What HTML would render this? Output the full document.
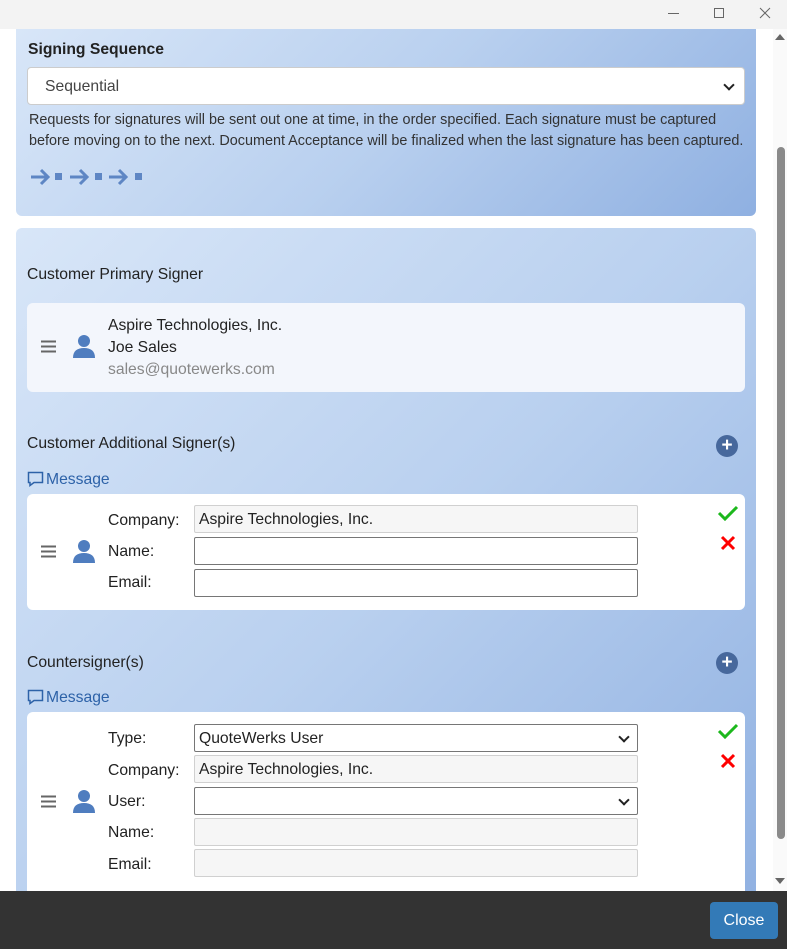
<!DOCTYPE html>
<html><head><style>
*{box-sizing:border-box;margin:0;padding:0}
body{width:787px;height:949px;overflow:hidden;background:#fff;font-family:"Liberation Sans",Arial,sans-serif;color:#222;position:relative}
.a{position:absolute}
.grad{background:linear-gradient(135deg,#d8e6f8 0%,#b9d0ef 50%,#8fb0e1 100%)}
.t16{font-size:15.7px}
.inp{position:absolute;left:194px;width:444px;height:28px;border:1px solid #767676;border-radius:2px;background:#fff;font-size:15.7px;padding:5px 4px;line-height:18px}
.ro{background:#f6f6f6;border-color:#d0d0d0}
.lbl{position:absolute;left:108px;font-size:15.7px;color:#222}
.msg{color:#2d62a8;font-size:15.7px}
.sel::after{content:"";position:absolute;right:9px;top:8px;width:6px;height:6px;border-right:2px solid #222;border-bottom:2px solid #222;transform:rotate(45deg)}
.big::after{top:13px;right:11px}
</style></head><body>
<div class="a" style="left:0;top:0;width:787px;height:29px;background:#f3f3f3"></div>
<div class="a" style="left:668px;top:13px;width:11px;height:1px;background:#666"></div>
<div class="a" style="left:714px;top:8px;width:10px;height:10px;border:1px solid #666"></div>
<svg class="a" style="left:759px;top:7px" width="12" height="12"><path d="M1 1L11 11M11 1L1 11" stroke="#666" stroke-width="1"/></svg>

<div class="a grad" style="left:16px;top:29px;width:740px;height:187px;border-radius:0 0 6px 6px"></div>
<div class="a" style="left:28px;top:41px;font-size:15.7px;font-weight:bold;color:#222">Signing Sequence</div>
<div class="a sel big" style="left:27px;top:67px;width:718px;height:38px;background:#fff;border:1px solid #ccc;border-radius:4px;padding:10px 17px;font-size:15.7px;color:#444">Sequential</div>
<div class="a" style="left:29px;top:110px;font-size:14.4px;line-height:21px;color:#333;width:740px;white-space:nowrap">Requests for signatures will be sent out one at time, in the order specified. Each signature must be captured<br>before moving on to the next. Document Acceptance will be finalized when the last signature has been captured.</div>
<svg class="a" style="left:29px;top:167px" width="120" height="20" fill="#5e86c4" stroke="#5e86c4">
<g stroke-width="3" fill="none"><path d="M2 10H19M12 3L19 10L12 17"/><path d="M41 10H58M51 3L58 10L51 17"/><path d="M80 10H97M90 3L97 10L90 17"/></g>
<rect x="26" y="6" width="7" height="7" stroke="none"/><rect x="66" y="6" width="7" height="7" stroke="none"/><rect x="106" y="6" width="7" height="7" stroke="none"/></svg>

<div class="a grad" style="left:16px;top:228px;width:740px;height:700px;border-radius:6px"></div>
<div class="a t16" style="left:27px;top:266px">Customer Primary Signer</div>
<div class="a" style="left:27px;top:303px;width:718px;height:89px;background:#f3f6fc;border-radius:6px"></div>
<div class="a" style="left:108px;top:315px;font-size:15.7px;line-height:22px">Aspire Technologies, Inc.<br>Joe Sales<br><span style="color:#888">sales@quotewerks.com</span></div>

<div class="a t16" style="left:27px;top:435px">Customer Additional Signer(s)</div>
<div class="a" style="left:716px;top:435px;width:22px;height:22px;border-radius:50%;background:#47689c;color:#fff;font-size:19px;line-height:21px;text-align:center;font-weight:bold">+</div>
<svg class="a" style="left:27px;top:471px" width="17" height="16"><path d="M1.5 1.5H15.5V11.5H7L3 14.5V11.5H1.5Z" fill="none" stroke="#2d62a8" stroke-width="1.5"/></svg>
<div class="a msg" style="left:46px;top:471px">Message</div>
<div class="a" style="left:27px;top:494px;width:718px;height:116px;background:#fff;border-radius:6px"></div>
<div class="lbl" style="top:512px">Company:</div><div class="inp ro" style="top:505px">Aspire Technologies, Inc.</div>
<div class="lbl" style="top:543px">Name:</div><div class="inp" style="top:537px"></div>
<div class="lbl" style="top:574px">Email:</div><div class="inp" style="top:569px"></div>
<svg class="a" style="left:717px;top:505px" width="22" height="16"><path d="M2 8L8 14L20 2" fill="none" stroke="#1cb81c" stroke-width="3"/></svg>
<svg class="a" style="left:720px;top:535px" width="16" height="16"><path d="M2 2L14 14M14 2L2 14" stroke="#f00" stroke-width="3"/></svg>

<div class="a t16" style="left:27px;top:654px">Countersigner(s)</div>
<div class="a" style="left:716px;top:652px;width:22px;height:22px;border-radius:50%;background:#47689c;color:#fff;font-size:19px;line-height:21px;text-align:center;font-weight:bold">+</div>
<svg class="a" style="left:27px;top:689px" width="17" height="16"><path d="M1.5 1.5H15.5V11.5H7L3 14.5V11.5H1.5Z" fill="none" stroke="#2d62a8" stroke-width="1.5"/></svg>
<div class="a msg" style="left:46px;top:689px">Message</div>
<div class="a" style="left:27px;top:712px;width:718px;height:200px;background:#fff;border-radius:6px"></div>
<div class="lbl" style="top:730px">Type:</div><div class="inp sel" style="top:724px">QuoteWerks User</div>
<div class="lbl" style="top:762px">Company:</div><div class="inp ro" style="top:755px">Aspire Technologies, Inc.</div>
<div class="lbl" style="top:793px">User:</div><div class="inp sel" style="top:787px"></div>
<div class="lbl" style="top:824px">Name:</div><div class="inp ro" style="top:818px"></div>
<div class="lbl" style="top:856px">Email:</div><div class="inp ro" style="top:849px"></div>
<svg class="a" style="left:717px;top:723px" width="22" height="16"><path d="M2 8L8 14L20 2" fill="none" stroke="#1cb81c" stroke-width="3"/></svg>
<svg class="a" style="left:720px;top:753px" width="16" height="16"><path d="M2 2L14 14M14 2L2 14" stroke="#f00" stroke-width="3"/></svg>

<svg class="a" style="left:41px;top:340px" width="15" height="13"><path d="M0 1.5H15M0 6.5H15M0 11.5H15" stroke="#666" stroke-width="2"/></svg>
<svg class="a" style="left:73px;top:335px" width="22" height="23" fill="#4f7dbf"><circle cx="11" cy="6" r="6"/><path d="M0 23C0 16 4 13 11 13S22 16 22 23Z"/></svg>
<svg class="a" style="left:41px;top:545px" width="15" height="13"><path d="M0 1.5H15M0 6.5H15M0 11.5H15" stroke="#666" stroke-width="2"/></svg>
<svg class="a" style="left:73px;top:540px" width="22" height="23" fill="#4f7dbf"><circle cx="11" cy="6" r="6"/><path d="M0 23C0 16 4 13 11 13S22 16 22 23Z"/></svg>
<svg class="a" style="left:41px;top:795px" width="15" height="13"><path d="M0 1.5H15M0 6.5H15M0 11.5H15" stroke="#666" stroke-width="2"/></svg>
<svg class="a" style="left:73px;top:790px" width="22" height="23" fill="#4f7dbf"><circle cx="11" cy="6" r="6"/><path d="M0 23C0 16 4 13 11 13S22 16 22 23Z"/></svg>

<div class="a" style="left:773px;top:29px;width:14px;height:862px;background:#fafafa"></div>
<svg class="a" style="left:775px;top:33px" width="10" height="8"><path d="M0 7L5 1L10 7Z" fill="#666"/></svg>
<div class="a" style="left:777px;top:147px;width:8px;height:692px;background:#8a8a8a;border-radius:4px"></div>
<svg class="a" style="left:775px;top:877px" width="10" height="8"><path d="M0 1L5 7L10 1Z" fill="#666"/></svg>

<div class="a" style="left:0;top:891px;width:787px;height:58px;background:#333"></div>
<div class="a" style="left:710px;top:902px;width:68px;height:37px;background:#337ab7;border-radius:4px;color:#fff;font-size:16px;line-height:37px;text-align:center">Close</div>
</body></html>
